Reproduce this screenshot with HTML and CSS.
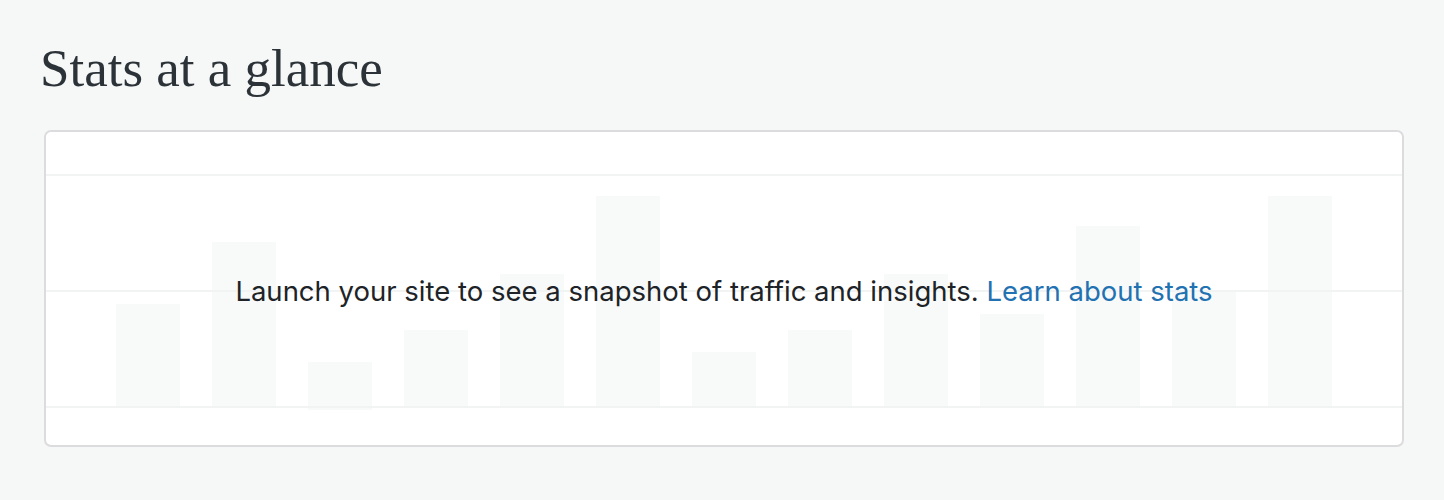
FILE: index.html
```html
<!DOCTYPE html>
<html lang="en">
<head>
<meta charset="utf-8">
<title>Stats at a glance</title>
<link rel="stylesheet" href="styles.css">
</head>
<body>
<main class="page">
  <h1 class="title">Stats at a glance</h1>
  <section class="card">
    <div class="chart">
      <div class="bars">
        <div class="bar" style="height:104px"></div>
        <div class="bar" style="height:166px"></div>
        <div class="bar bar-neg" style="height:48px"></div>
        <div class="bar" style="height:78px"></div>
        <div class="bar" style="height:134px"></div>
        <div class="bar" style="height:212px"></div>
        <div class="bar" style="height:56px"></div>
        <div class="bar" style="height:78px"></div>
        <div class="bar" style="height:134px"></div>
        <div class="bar" style="height:94px"></div>
        <div class="bar" style="height:182px"></div>
        <div class="bar" style="height:118px"></div>
        <div class="bar" style="height:212px"></div>
      </div>
      <div class="gridlines">
        <div class="gridline"></div>
        <div class="gridline"></div>
        <div class="gridline"></div>
      </div>
      <p class="message">Launch your site to see a snapshot of traffic and insights. <a class="link" href="#">Learn about stats</a></p>
    </div>
  </section>
</main>
</body>
</html>
```

FILE: styles.css
```css
html, body {
  margin: 0;
  padding: 0;
  background: #f6f7f7;
}

.page {
  padding: 38px 40px 0;
}

.title {
  margin: 0;
  font-family: "Liberation Serif", "DejaVu Serif", serif;
  font-weight: 400;
  font-size: 53px;
  line-height: 60px;
  color: #2c3338;
}

.card {
  box-sizing: border-box;
  margin: 32px 0 0 4px;
  height: 317px;
  background: #fff;
  border: 2px solid #dcdcde;
  border-radius: 7px;
  padding: 42px 0 37px;
}

.chart {
  display: grid;
  height: 234px;
}

.bars,
.gridlines,
.message {
  grid-area: 1 / 1;
}

.bars {
  display: flex;
  align-items: flex-end;
  gap: 32px;
  padding-left: 70px;
}

.bar {
  width: 64px;
  flex: none;
  background: #f8f9f9;
}

.bar-neg {
  margin-bottom: -2px;
}

.gridlines {
  display: flex;
  flex-direction: column;
  justify-content: space-between;
  height: 234px;
}

.gridline {
  height: 2px;
  background: #f2f3f3;
}

.message {
  align-self: center;
  justify-self: center;
  margin: 0;
  font-family: Inter, "Noto Sans", sans-serif;
  font-size: 27.5px;
  line-height: 32px;
  color: #1d2327;
}

.link {
  color: #2271b1;
  text-decoration: none;
}
```
